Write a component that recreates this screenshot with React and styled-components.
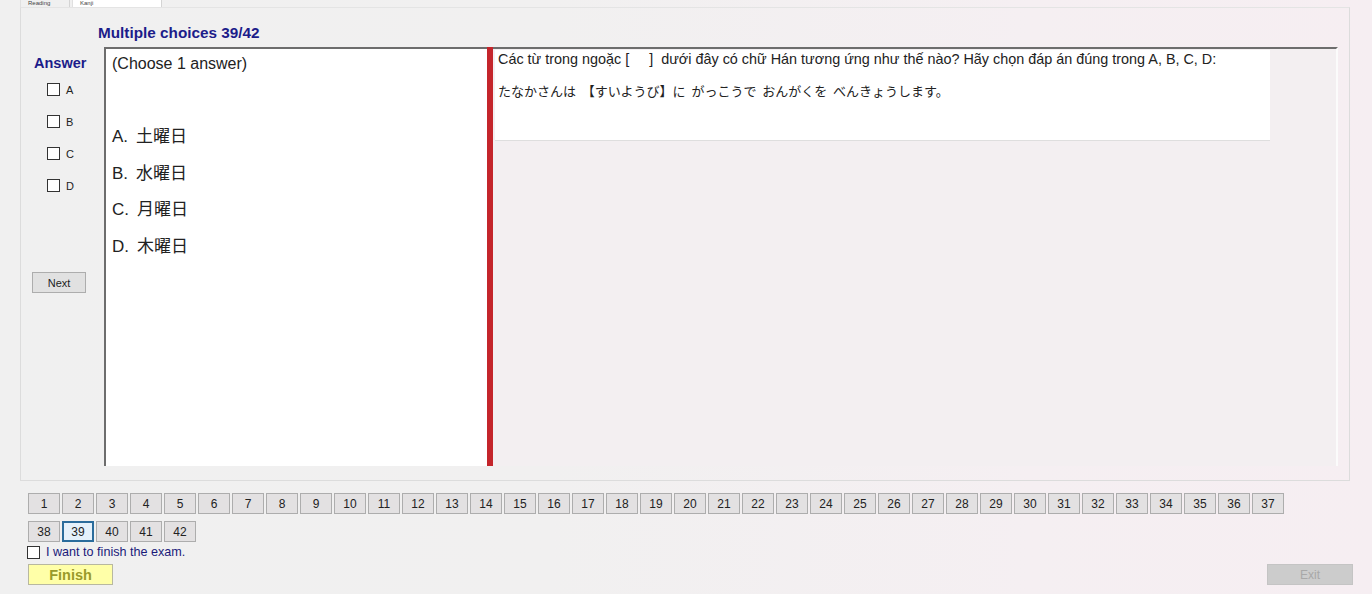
import React from 'react';
import styled, { createGlobalStyle } from 'styled-components';

const GlobalStyle = createGlobalStyle`
  html, body {
    margin: 0;
    padding: 0;
  }
  body {
    font-family: "Liberation Sans", Arial, "Noto Sans CJK JP", sans-serif;
    background: #f0f0f0;
  }
`;

const Page = styled.div`
  width: 1372px;
  height: 594px;
  overflow: hidden;
  background: linear-gradient(90deg, #f0f0f0 0%, #f1f0f0 40%, #f5eff2 75%, #f6eef2 100%);
  display: flex;
  flex-direction: column;
`;

const TabStrip = styled.div`
  display: flex;
  height: 7px;
  padding-left: 20px;
  gap: 2px;
`;

const Tab = styled.div`
  width: ${p => p.w}px;
  height: 7px;
  display: flex;
  align-items: flex-end;
  padding-left: 7px;
  box-sizing: border-box;
  background: ${p => (p.active ? '#ffffff' : '#f0f0f0')};
  border-right: 1px solid #d4d4d4;
  border-left: 1px solid #e0e0e0;
  font-size: 6px;
  line-height: 7px;
  color: #444;
`;

const TabPage = styled.div`
  margin: 0 22px 0 20px;
  height: 474px;
  box-sizing: border-box;
  border: 1px solid #dcdcdc;
  border-top: 1px solid #e4e4e4;
  display: flex;
  flex-direction: column;
`;

const Title = styled.div`
  margin: 16px 0 0 77px;
  height: 17px;
  font-size: 15.3px;
  line-height: 17px;
  font-weight: bold;
  color: #1c1c8a;
`;

const ContentRow = styled.div`
  display: flex;
  margin-top: 6px;
  height: 419px;
`;

const AnswerCol = styled.div`
  width: 83px;
  display: flex;
  flex-direction: column;
`;

const AnswerLabel = styled.div`
  margin: 8px 0 0 13px;
  font-size: 14.5px;
  line-height: 16px;
  font-weight: bold;
  color: #1c1c8a;
`;

const CheckList = styled.div`
  display: flex;
  flex-direction: column;
  gap: 19px;
  margin: 12px 0 0 26px;
`;

const CheckRow = styled.label`
  display: flex;
  align-items: center;
  gap: 6px;
  height: 13px;
  font-size: 11px;
  color: #222;
`;

const Box = styled.span`
  width: 11px;
  height: 11px;
  border: 1px solid #333;
  background: #fff;
  flex-shrink: 0;
`;

const NextButton = styled.button`
  margin: 80px 0 0 11px;
  width: 54px;
  height: 21px;
  padding: 0;
  background: #e1e1e1;
  border: 1px solid #adadad;
  font-family: inherit;
  font-size: 11px;
  color: #222;
`;

const TextPanel = styled.div`
  width: 383px;
  box-sizing: border-box;
  background: #fff;
  border-top: 2px solid #6d6d6d;
  border-left: 2px solid #6d6d6d;
  padding: 6px 0 0 6px;
  display: flex;
  flex-direction: column;
`;

const Hint = styled.div`
  font-size: 16px;
  line-height: 18px;
  color: #222;
`;

const Options = styled.div`
  margin-top: 46px;
  display: flex;
  flex-direction: column;
`;

const Option = styled.div`
  height: 36.5px;
  font-size: 17px;
  line-height: 36px;
  color: #222;
  b {
    font-weight: normal;
    margin-right: 8px;
  }
`;

const Splitter = styled.div`
  width: 6px;
  background: #c4252b;
`;

const RightPanel = styled.div`
  width: 845px;
  box-sizing: border-box;
  border-top: 2px solid #6d6d6d;
  border-right: 2px solid #fbfbfb;
  background: #f3eff1;
  padding: 1px 0 0 2px;
`;

const QuestionBox = styled.div`
  width: 775px;
  height: 91px;
  box-sizing: border-box;
  background: #fff;
  border-bottom: 1px solid #dedede;
  padding: 1px 0 0 3px;
  color: #222;
`;

const QLine = styled.div`
  line-height: 16px;
  margin-bottom: ${p => p.mb || 0}px;
  white-space: pre;
  font-family: ${p =>
    p.jp
      ? '"Noto Sans CJK JP", "Liberation Sans", sans-serif'
      : '"Liberation Sans", Arial, sans-serif'};
  font-size: ${p => (p.jp ? 13 : 14.4)}px;
`;

const NumberGrid = styled.div`
  margin: 12px 0 0 28px;
  width: 1260px;
  display: flex;
  flex-wrap: wrap;
  column-gap: 2px;
  row-gap: 7px;
`;

const NumButton = styled.button`
  width: 32px;
  height: 21px;
  padding: 0;
  box-sizing: border-box;
  background: ${p => (p.selected ? '#e5f1fb' : '#e3e1e2')};
  border: ${p => (p.selected ? '2px solid #2b6c9c' : '1px solid #adadad')};
  font-family: inherit;
  font-size: 12px;
  color: #222;
`;

const FinishCheck = styled.label`
  margin: 3px 0 0 27px;
  display: flex;
  align-items: center;
  gap: 6px;
  height: 14px;
  font-size: 12.6px;
  color: #1a1a7a;
`;

const Footer = styled.div`
  margin: 5px 19px 0 28px;
  display: flex;
  justify-content: space-between;
`;

const FinishButton = styled.button`
  width: 85px;
  height: 21px;
  padding: 0;
  background: #ffffa8;
  border: 1px solid #b8b8a0;
  font-family: inherit;
  font-size: 14.5px;
  font-weight: bold;
  color: #9a9a2a;
`;

const ExitButton = styled.button`
  width: 86px;
  height: 21px;
  padding: 0;
  background: #cccccc;
  border: 1px solid #c4c4c4;
  font-family: inherit;
  font-size: 12px;
  color: #a8a8a8;
`;

const options = [
  ['A.', '土曜日'],
  ['B.', '水曜日'],
  ['C.', '月曜日'],
  ['D.', '木曜日'],
];

const numbers = Array.from({ length: 42 }, (_, i) => i + 1);

export default function App() {
  return (
    <>
      <GlobalStyle />
      <Page>
        <TabStrip>
          <Tab w={50}>Reading</Tab>
          <Tab w={90} active>Kanji</Tab>
        </TabStrip>
        <TabPage>
          <Title>Multiple choices 39/42</Title>
          <ContentRow>
            <AnswerCol>
              <AnswerLabel>Answer</AnswerLabel>
              <CheckList>
                {['A', 'B', 'C', 'D'].map(l => (
                  <CheckRow key={l}>
                    <Box />
                    {l}
                  </CheckRow>
                ))}
              </CheckList>
              <NextButton>Next</NextButton>
            </AnswerCol>
            <TextPanel>
              <Hint>(Choose 1 answer)</Hint>
              <Options>
                {options.map(([k, v]) => (
                  <Option key={k}>
                    <b>{k}</b>
                    {v}
                  </Option>
                ))}
              </Options>
            </TextPanel>
            <Splitter />
            <RightPanel>
              <QuestionBox>
                <QLine mb={16}>
                  {'Các từ trong ngoặc [     ]  dưới đây có chữ Hán tương ứng như thế nào? Hãy chọn đáp án đúng trong A, B, C, D:'}
                </QLine>
                <QLine jp>
                  {'たなかさんは  【すいようび】に  がっこうで  おんがくを  べんきょうします。'}
                </QLine>
              </QuestionBox>
            </RightPanel>
          </ContentRow>
        </TabPage>
        <NumberGrid>
          {numbers.map(n => (
            <NumButton key={n} selected={n === 39}>
              {n}
            </NumButton>
          ))}
        </NumberGrid>
        <FinishCheck>
          <Box />
          I want to finish the exam.
        </FinishCheck>
        <Footer>
          <FinishButton>Finish</FinishButton>
          <ExitButton>Exit</ExitButton>
        </Footer>
      </Page>
    </>
  );
}
